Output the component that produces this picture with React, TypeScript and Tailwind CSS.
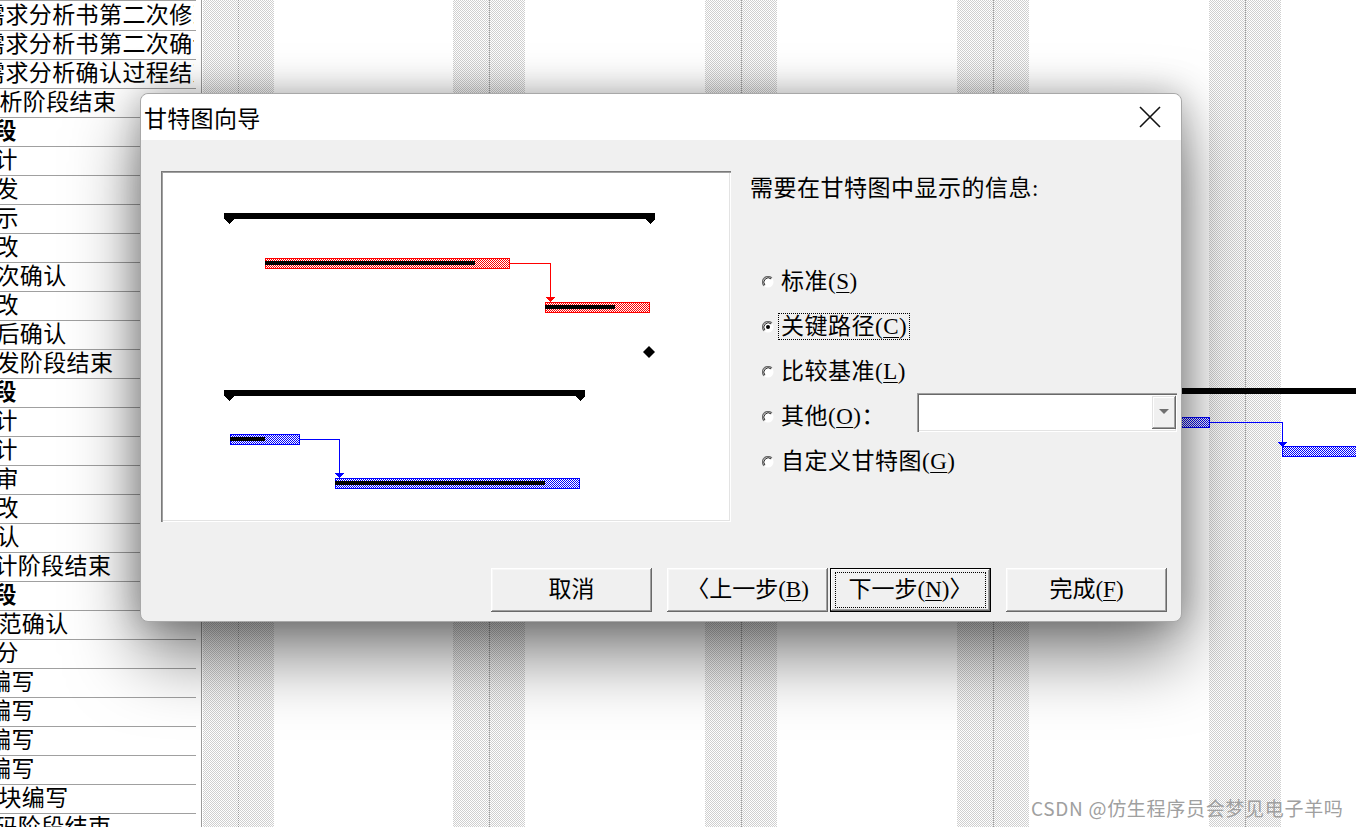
import React from "react";

type Row = { t: string; x: number; b?: boolean };

// task names, x = left of the first glyph box (the column is scrolled, so a part is cut off)
const rows: Row[] = [
  { t: "需求分析书第二次修改", x: -18 },
  { t: "需求分析书第二次确认", x: -18 },
  { t: "需求分析确认过程结束", x: -18 },
  { t: "分析阶段结束", x: -24 },
  { t: "阶段", x: -30, b: true },
  { t: "设计", x: -29 },
  { t: "开发", x: -28 },
  { t: "演示", x: -28 },
  { t: "修改", x: -28 },
  { t: "二次确认", x: -27 },
  { t: "修改", x: -28 },
  { t: "最后确认", x: -27 },
  { t: "开发阶段结束", x: -27 },
  { t: "阶段", x: -30, b: true },
  { t: "设计", x: -29 },
  { t: "设计", x: -29 },
  { t: "评审", x: -28 },
  { t: "修改", x: -28 },
  { t: "确认", x: -27 },
  { t: "设计阶段结束", x: -29 },
  { t: "阶段", x: -30, b: true },
  { t: "规范确认", x: -25 },
  { t: "划分", x: -28 },
  { t: "编写", x: -12 },
  { t: "编写", x: -12 },
  { t: "编写", x: -12 },
  { t: "编写", x: -12 },
  { t: "模块编写", x: -25 },
  { t: "编码阶段结束", x: -29 },
];

const serif = "font-['Liberation_Serif','Noto_Sans_CJK_SC',serif]";

function Band({ w }: { w: number }) {
  return (
    <div
      className="h-full flex justify-center bg-[repeating-conic-gradient(#cfcfcf_0_25%,#ffffff_0_50%)] bg-[length:2px_2px]"
      style={{ width: w }}
    >
      <div className="h-full w-px border-l border-dotted border-[#9a9a9a]" />
    </div>
  );
}

function Patterns() {
  return (
    <defs>
      <pattern id="redck" width="2" height="2" patternUnits="userSpaceOnUse">
        <rect width="2" height="2" fill="#fff" />
        <rect width="1" height="1" fill="#ff0000" />
        <rect x="1" y="1" width="1" height="1" fill="#ff0000" />
      </pattern>
      <pattern id="blueck" width="2" height="2" patternUnits="userSpaceOnUse">
        <rect width="2" height="2" fill="#fff" />
        <rect width="1" height="1" fill="#0000ff" />
        <rect x="1" y="1" width="1" height="1" fill="#0000ff" />
      </pattern>
    </defs>
  );
}

function TaskBar({ x1, x2, y, p, c }: { x1: number; x2: number; y: number; p: number; c: "red" | "blue" }) {
  const col = c === "red" ? "#ff0000" : "#0000ff";
  return (
    <g>
      <rect x={x1 + 0.5} y={y + 0.5} width={x2 - x1 - 1} height={10} fill={`url(#${c}ck)`} stroke={col} />
      <rect x={x1} y={y + 3} width={p - x1} height={4} fill="#000" />
    </g>
  );
}

function Summary({ x1, x2, y }: { x1: number; x2: number; y: number }) {
  return (
    <g fill="#000">
      <rect x={x1} y={y} width={x2 - x1} height={6} />
      <polygon points={`${x1},${y + 6} ${x1 + 10},${y + 6} ${x1 + 5},${y + 11}`} />
      <polygon points={`${x2 - 10},${y + 6} ${x2},${y + 6} ${x2 - 5},${y + 11}`} />
    </g>
  );
}

function Link({ x1, y, x2, y2, c }: { x1: number; y: number; x2: number; y2: number; c: string }) {
  return (
    <g>
      <polyline points={`${x1},${y + 0.5} ${x2 + 0.5},${y + 0.5} ${x2 + 0.5},${y2}`} fill="none" stroke={c} />
      <polygon points={`${x2 - 4.5},${y2 - 1} ${x2 + 5.5},${y2 - 1} ${x2 + 0.5},${y2 + 4}`} fill={c} />
    </g>
  );
}

function Radio({ on }: { on?: boolean }) {
  return (
    <svg width="12" height="12" viewBox="0 0 12 12" className="shrink-0">
      <circle cx="6" cy="6" r="5.5" fill="#fff" />
      <path d="M2.1 9.9 A5.5 5.5 0 0 1 9.9 2.1" fill="none" stroke="#6a6a6a" strokeWidth="1.3" />
      <path d="M2.9 9.1 A4.4 4.4 0 0 1 9.1 2.9" fill="none" stroke="#2a2a2a" strokeWidth="1" />
      {on && <circle cx="6" cy="6" r="2" fill="#000" />}
    </svg>
  );
}

function Key({ k }: { k: string }) {
  return (
    <span>
      (<span className="underline underline-offset-[3px] decoration-1">{k}</span>)
    </span>
  );
}

function Btn({ children, def }: { children: React.ReactNode; def?: boolean }) {
  return (
    <div
      className={
        "w-[161px] h-[44px] bg-[#f0f0f0] flex items-center justify-center text-[23px] text-black " +
        (def
          ? "border border-black shadow-[inset_-1px_-1px_0_#696969,inset_1px_1px_0_#fff,inset_-2px_-2px_0_#a0a0a0]"
          : "shadow-[inset_-1px_-1px_0_#696969,inset_1px_1px_0_#fff,inset_-2px_-2px_0_#a0a0a0,inset_2px_2px_0_#f7f7f7]")
      }
    >
      {def ? (
        <div className="w-[151px] h-[36px] border border-dotted border-black flex items-center justify-center">
          {children}
        </div>
      ) : (
        children
      )}
    </div>
  );
}

export default function App() {
  return (
    <div className={"relative w-[1356px] h-[827px] overflow-hidden bg-white flex " + serif}>
      {/* task name column */}
      <div className="w-[196px] h-full border-t border-[#a0a0a0] pt-px shrink-0">
        {rows.map((r, i) => (
          <div key={i} className="h-[29px] border-b border-[#a0a0a0]">
            <div className="w-[194px] overflow-hidden whitespace-nowrap">
              <span
                className={"block text-[23px] leading-[28px] tracking-[0.4px] text-black " + (r.b ? "font-bold" : "")}
                style={{ marginLeft: r.x }}
              >
                {r.t}
              </span>
            </div>
          </div>
        ))}
      </div>
      <div className="w-[5px] shrink-0" />
      <div className="w-px h-full bg-[#9a9a9a] shrink-0" />

      {/* gantt timescale area */}
      <div className="relative flex-1 h-full flex">
        <div className="w-px" />
        <Band w={71} />
        <div className="w-[179px]" />
        <Band w={72} />
        <div className="w-[180px]" />
        <Band w={72} />
        <div className="w-[180px]" />
        <Band w={72} />
        <div className="w-[180px]" />
        <Band w={72} />
        <svg className="absolute inset-0 w-full h-full" shapeRendering="crispEdges">
          <Patterns />
          <rect x={880} y={388} width={300} height={6} fill="#000" />
          <TaskBar x1={940} x2={1008} y={417} p={960} c="blue" />
          <Link x1={1008} y={422} x2={1080} y2={443} c="#0000ff" />
          <TaskBar x1={1080} x2={1180} y={446} p={1080} c="blue" />
        </svg>
      </div>

      {/* dialog */}
      <div className="absolute left-[140px] top-[93px] w-[1042px] h-[529px] rounded-[8px] border border-[#a8a8a8] bg-[#f0f0f0] flex flex-col shadow-[0_34px_70px_rgba(0,0,0,0.5),0_0_34px_rgba(0,0,0,0.26)]">
        <div className="h-[46px] shrink-0 bg-white rounded-t-[8px] flex items-center justify-between pl-[3px] pr-[20px]">
          <span className="font-['Noto_Sans_CJK_SC',sans-serif] text-[23px] leading-[30px] tracking-[0.3px] text-black">甘特图向导</span>
          <svg width="22" height="22" viewBox="0 0 22 22">
            <path d="M1 1 L21 21 M21 1 L1 21" stroke="#111" strokeWidth="1.6" />
          </svg>
        </div>

        <div className="flex-1 flex items-start pl-[20px] pt-[31px]">
          <div className="relative w-[570px] h-[351px] bg-white shrink-0 shadow-[inset_1px_1px_0_#7a7a7a,inset_2px_2px_0_#a0a0a0,inset_-1px_-1px_0_#fff,inset_-2px_-2px_0_#e3e3e3]">
            <svg className="absolute inset-0" width="570" height="351" shapeRendering="crispEdges">
              <Patterns />
              <Summary x1={63} x2={494} y={42} />
              <TaskBar x1={104} x2={349} y={87} p={314} c="red" />
              <Link x1={349} y={92} x2={389} y2={127} c="#ff0000" />
              <TaskBar x1={384} x2={489} y={131} p={454} c="red" />
              <polygon points="488,175 494,181 488,187 482,181" fill="#000" shapeRendering="auto" />
              <Summary x1={63} x2={424} y={219} />
              <TaskBar x1={69} x2={139} y={263} p={104} c="blue" />
              <Link x1={139} y={268} x2={178} y2={303} c="#0000ff" />
              <TaskBar x1={174} x2={419} y={307} p={384} c="blue" />
            </svg>
          </div>

          <div className="flex-1 ml-[19px] pr-[4px] text-[23px] tracking-[0.5px] text-black">
            <div className="leading-[30px] pt-[3px]">需要在甘特图中显示的信息:</div>
            <div className="mt-[55px] flex flex-col">
              <div className="h-[45px] flex items-center">
                <div className="ml-[12px]">
                  <Radio />
                </div>
                <span className="ml-[7px] leading-[27px]">
                  标准<Key k="S" />
                </span>
              </div>
              <div className="h-[45px] flex items-center">
                <div className="ml-[12px]">
                  <Radio on />
                </div>
                <span className="ml-[4px] leading-[25px] px-[2px] border border-dotted border-black">
                  关键路径<Key k="C" />
                </span>
              </div>
              <div className="h-[45px] flex items-center">
                <div className="ml-[12px]">
                  <Radio />
                </div>
                <span className="ml-[7px] leading-[27px]">
                  比较基准<Key k="L" />
                </span>
              </div>
              <div className="h-[45px] flex items-center">
                <div className="ml-[12px]">
                  <Radio />
                </div>
                <span className="ml-[7px] leading-[27px]">
                  其他<Key k="O" />：
                </span>
                <div className="ml-auto mb-[9px] w-[260px] h-[39px] bg-white flex items-center justify-end pr-[1px] shadow-[inset_1px_1px_0_#a0a0a0,inset_2px_2px_0_#696969,inset_-1px_-1px_0_#fff,inset_-2px_-2px_0_#e3e3e3]">
                  <div className="w-[24px] h-[33px] bg-[#f0f0f0] flex items-center justify-center shadow-[inset_-1px_-1px_0_#696969,inset_1px_1px_0_#e3e3e3,inset_-2px_-2px_0_#a0a0a0,inset_2px_2px_0_#fff]">
                    <svg width="10" height="6" viewBox="0 0 10 6">
                      <polygon points="0,0 10,0 5,5" fill="#707070" />
                    </svg>
                  </div>
                </div>
              </div>
              <div className="h-[45px] flex items-center">
                <div className="ml-[12px]">
                  <Radio />
                </div>
                <span className="ml-[7px] leading-[27px]">
                  自定义甘特图<Key k="G" />
                </span>
              </div>
            </div>
          </div>
        </div>

        <div className="flex justify-end pr-[14px] pb-[9px] shrink-0">
          <Btn>取消</Btn>
          <div className="w-[15px]" />
          <Btn>
            <span>
              〈上一步<Key k="B" />
            </span>
          </Btn>
          <div className="w-[2px]" />
          <Btn def>
            <span>
              下一步<Key k="N" />〉
            </span>
          </Btn>
          <div className="w-[15px]" />
          <Btn>
            <span>
              完成<Key k="F" />
            </span>
          </Btn>
        </div>
      </div>

      <div className="absolute left-[1031px] top-[795px] text-[19px] leading-[26px] tracking-[0.7px] text-[#a0a0a0] font-['Noto_Sans_CJK_SC',sans-serif] whitespace-nowrap">
        CSDN @仿生程序员会梦见电子羊吗
      </div>
    </div>
  );
}
